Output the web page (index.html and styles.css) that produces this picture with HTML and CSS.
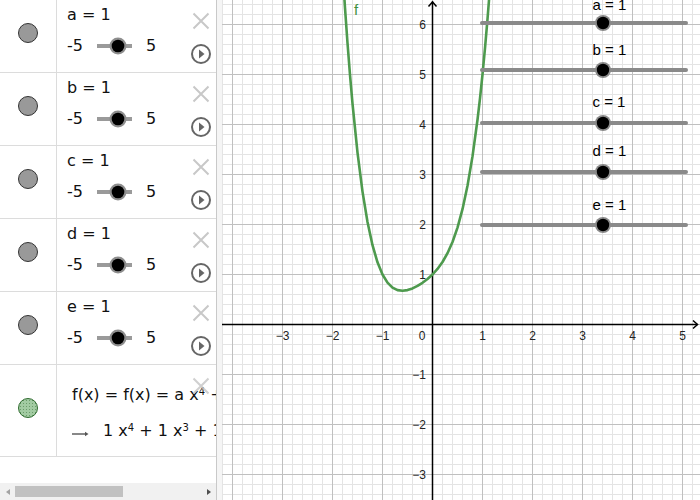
FILE: index.html
```html
<!DOCTYPE html>
<html>
<head>
<meta charset="utf-8">
<link rel="stylesheet" href="styles.css">
</head>
<body>
<div class="app">
  <div class="algebra">
    <div class="rows">
      <div class="row">
        <div class="marble-cell"><span class="marble"></span></div>
        <div class="item">
          <div class="item-main">
            <div class="def">a = 1</div>
            <div class="slider-line"><span>-5</span><svg class="mini" viewBox="0 0 38 20"><line x1="1" y1="10" x2="36" y2="10"/><circle class="halo" cx="22" cy="10" r="8.5"/><circle class="dot" cx="22" cy="10" r="6.3"/></svg><span>5</span></div>
          </div>
          <div class="controls">
            <svg class="del" viewBox="0 0 18 18"><path d="M1.5 1.5L16.5 16.5M16.5 1.5L1.5 16.5"/></svg>
            <svg class="play" viewBox="0 0 20 20"><circle cx="10" cy="10" r="9"/><polygon points="8,5.5 13.5,10 8,14.5"/></svg>
          </div>
        </div>
      </div>
      <div class="row">
        <div class="marble-cell"><span class="marble"></span></div>
        <div class="item">
          <div class="item-main">
            <div class="def">b = 1</div>
            <div class="slider-line"><span>-5</span><svg class="mini" viewBox="0 0 38 20"><line x1="1" y1="10" x2="36" y2="10"/><circle class="halo" cx="22" cy="10" r="8.5"/><circle class="dot" cx="22" cy="10" r="6.3"/></svg><span>5</span></div>
          </div>
          <div class="controls">
            <svg class="del" viewBox="0 0 18 18"><path d="M1.5 1.5L16.5 16.5M16.5 1.5L1.5 16.5"/></svg>
            <svg class="play" viewBox="0 0 20 20"><circle cx="10" cy="10" r="9"/><polygon points="8,5.5 13.5,10 8,14.5"/></svg>
          </div>
        </div>
      </div>
      <div class="row">
        <div class="marble-cell"><span class="marble"></span></div>
        <div class="item">
          <div class="item-main">
            <div class="def">c = 1</div>
            <div class="slider-line"><span>-5</span><svg class="mini" viewBox="0 0 38 20"><line x1="1" y1="10" x2="36" y2="10"/><circle class="halo" cx="22" cy="10" r="8.5"/><circle class="dot" cx="22" cy="10" r="6.3"/></svg><span>5</span></div>
          </div>
          <div class="controls">
            <svg class="del" viewBox="0 0 18 18"><path d="M1.5 1.5L16.5 16.5M16.5 1.5L1.5 16.5"/></svg>
            <svg class="play" viewBox="0 0 20 20"><circle cx="10" cy="10" r="9"/><polygon points="8,5.5 13.5,10 8,14.5"/></svg>
          </div>
        </div>
      </div>
      <div class="row">
        <div class="marble-cell"><span class="marble"></span></div>
        <div class="item">
          <div class="item-main">
            <div class="def">d = 1</div>
            <div class="slider-line"><span>-5</span><svg class="mini" viewBox="0 0 38 20"><line x1="1" y1="10" x2="36" y2="10"/><circle class="halo" cx="22" cy="10" r="8.5"/><circle class="dot" cx="22" cy="10" r="6.3"/></svg><span>5</span></div>
          </div>
          <div class="controls">
            <svg class="del" viewBox="0 0 18 18"><path d="M1.5 1.5L16.5 16.5M16.5 1.5L1.5 16.5"/></svg>
            <svg class="play" viewBox="0 0 20 20"><circle cx="10" cy="10" r="9"/><polygon points="8,5.5 13.5,10 8,14.5"/></svg>
          </div>
        </div>
      </div>
      <div class="row">
        <div class="marble-cell"><span class="marble"></span></div>
        <div class="item">
          <div class="item-main">
            <div class="def">e = 1</div>
            <div class="slider-line"><span>-5</span><svg class="mini" viewBox="0 0 38 20"><line x1="1" y1="10" x2="36" y2="10"/><circle class="halo" cx="22" cy="10" r="8.5"/><circle class="dot" cx="22" cy="10" r="6.3"/></svg><span>5</span></div>
          </div>
          <div class="controls">
            <svg class="del" viewBox="0 0 18 18"><path d="M1.5 1.5L16.5 16.5M16.5 1.5L1.5 16.5"/></svg>
            <svg class="play" viewBox="0 0 20 20"><circle cx="10" cy="10" r="9"/><polygon points="8,5.5 13.5,10 8,14.5"/></svg>
          </div>
        </div>
      </div>
      <div class="row func-row">
        <div class="marble-cell"><span class="marble marble-f"></span></div>
        <div class="func-item">
          <div class="func-def">f(x) = f(x) = a x<sup>4</sup> + b x<sup>3</sup> + c x<sup>2</sup> + d x + e</div>
          <div class="func-val"><svg class="arrow" viewBox="0 0 17 20"><path class="shaft" d="M0 13H15"/><path class="head" d="M13 10.8L16.5 13L13 15.2Z"/></svg>1 x<sup>4</sup> + 1 x<sup>3</sup> + 1 x<sup>2</sup> + 1 x + 1</div>
        </div>
        <svg class="del del-over" viewBox="0 0 18 18"><path d="M1.5 1.5L16.5 16.5M16.5 1.5L1.5 16.5"/></svg>
      </div>
    </div>
    <div class="hscroll">
      <div class="sb-btn"><span class="tri-left"></span></div>
      <div class="sb-track"><div class="sb-thumb"></div></div>
      <div class="sb-btn"><span class="tri-right"></span></div>
    </div>
  </div>
  <div class="splitter"></div>
  <div class="graphics">
    <svg class="plot" width="478" height="500" viewBox="0 0 478 500">
      <defs>
        <pattern id="minor" x="0" y="4" width="10" height="10" patternUnits="userSpaceOnUse">
          <path d="M0.5 0V10M0 0.5H10" stroke="#e4e4e4" stroke-width="1" fill="none"/>
        </pattern>
        <pattern id="major" x="10" y="24" width="50" height="50" patternUnits="userSpaceOnUse">
          <path d="M0.5 0V50M0 0.5H50" stroke="#c0c0c0" stroke-width="1" fill="none"/>
        </pattern>
      </defs>
      <rect width="478" height="500" fill="#fff"/>
      <rect width="478" height="500" fill="url(#minor)"/>
      <rect width="478" height="500" fill="url(#major)"/>

      <g class="axes">
        <path d="M0 324.5H475.5M210.5 1.5V500"/>
        <path d="M206.5 6.5L210.5 2L214.5 6.5"/>
        <path d="M471 320.5L475.5 324.5L471 328.5"/>
      </g>

      <g class="xlabels">
        <text x="60.5" y="340">−3</text>
        <text x="110.5" y="340">−2</text>
        <text x="160.5" y="340">−1</text>
        <text x="200" y="340">0</text>
        <text x="260.5" y="340">1</text>
        <text x="310.5" y="340">2</text>
        <text x="360.5" y="340">3</text>
        <text x="410.5" y="340">4</text>
        <text x="460.5" y="340">5</text>
      </g>
      <g class="ylabels">
        <text x="204" y="28.5">6</text>
        <text x="204" y="78.5">5</text>
        <text x="204" y="128.5">4</text>
        <text x="204" y="178.5">3</text>
        <text x="204" y="228.5">2</text>
        <text x="204" y="278.5">1</text>
        <text x="204" y="378.5">−1</text>
        <text x="204" y="428.5">−2</text>
        <text x="204" y="478.5">−3</text>
      </g>

      <path class="curve" d="M120.5 -30.8 L123 7.9 L125.5 43 L128 74.9 L130.5 103.6 L135.5 152.6 L140.5 191.6 L145.5 222 L150.5 245.2 L155.5 262.3 L160.5 274.5 L165.5 282.6 L170.5 287.6 L175.5 290.1 L180.5 290.8 L185.5 290.1 L190.5 288.4 L195.5 285.9 L200.5 282.8 L205.5 279 L210.5 274.5 L215.5 268.9 L220.5 262 L225.5 253.2 L230.5 242 L235.5 227.6 L240.5 209.2 L245.5 185.8 L250.5 156.4 L255.5 119.7 L258 98.3 L260.5 74.5 L263 48.2 L265.5 19.2 L268 -12.6 L270.5 -47.6"/>
      <text class="flabel" x="132" y="15">f</text>

      <g class="sliders">
        <line x1="260" y1="23" x2="464" y2="23"/>
        <circle class="halo" cx="381" cy="23" r="8"/><circle class="dot" cx="381" cy="23" r="6.2"/>
        <text x="370.5" y="10">a = 1</text>

        <line x1="260" y1="70" x2="464" y2="70"/>
        <circle class="halo" cx="381" cy="70" r="8"/><circle class="dot" cx="381" cy="70" r="6.2"/>
        <text x="370.5" y="54.5">b = 1</text>

        <line x1="260" y1="123" x2="464" y2="123"/>
        <circle class="halo" cx="381" cy="123" r="8"/><circle class="dot" cx="381" cy="123" r="6.2"/>
        <text x="370.5" y="107">c = 1</text>

        <line x1="260" y1="172" x2="464" y2="172"/>
        <circle class="halo" cx="381" cy="172" r="8"/><circle class="dot" cx="381" cy="172" r="6.2"/>
        <text x="370.5" y="156">d = 1</text>

        <line x1="260" y1="225" x2="464" y2="225"/>
        <circle class="halo" cx="381" cy="225" r="8"/><circle class="dot" cx="381" cy="225" r="6.2"/>
        <text x="370.5" y="209.5">e = 1</text>
      </g>
    </svg>
  </div>
</div>
</body>
</html>
```

FILE: styles.css
```css
* { box-sizing: border-box; }

html, body {
  margin: 0;
  padding: 0;
  background: #fff;
}

body {
  width: 700px;
  height: 500px;
  overflow: hidden;
  font-family: "DejaVu Sans", "Liberation Sans", sans-serif;
  color: #111;
}

.app {
  display: flex;
  height: 500px;
}

/* ---------- algebra view ---------- */
.algebra {
  width: 216px;
  flex: none;
  display: flex;
  flex-direction: column;
  background: #fff;
}

.rows {
  flex: 1;
  overflow: hidden;
}

.row {
  display: flex;
  height: 73px;
  border-bottom: 1px solid #dcdcdc;
  overflow: hidden;
}

.func-row {
  height: 92px;
  position: relative;
}

.marble-cell {
  width: 57px;
  flex: none;
  border-right: 1px solid #dcdcdc;
  display: flex;
  justify-content: center;
  align-items: flex-start;
}

.marble {
  width: 20px;
  height: 20px;
  border-radius: 50%;
  background: #999;
  border: 1px solid #333;
  margin-top: 23px;
}

.marble-f {
  margin-top: 33px;
  border-color: #2f6b2f;
  background:
    radial-gradient(circle, rgba(40, 100, 40, 0.45) 0.6px, transparent 0.9px) 0 0 / 3px 3px,
    #a2cba2;
}

.item {
  flex: 1;
  min-width: 0;
  display: flex;
  padding-left: 10px;
}

.item-main {
  flex: 1;
  padding-top: 5px;
  font-size: 16px;
}

.def {
  line-height: 20px;
  height: 20px;
  white-space: nowrap;
}

.slider-line {
  display: flex;
  align-items: center;
  height: 20px;
  line-height: 20px;
  margin-top: 11px;
  white-space: nowrap;
}

.mini {
  width: 38px;
  height: 20px;
  margin: 0 12px 0 13px;
  flex: none;
}

.mini line {
  stroke: #9a9a9a;
  stroke-width: 4;
}

.mini .halo { fill: #8e8e8e; }
.mini .dot { fill: #000; }

.controls {
  width: 20px;
  flex: none;
  margin-right: 5px;
  padding-top: 12px;
  display: flex;
  flex-direction: column;
  align-items: center;
}

.del {
  width: 18px;
  height: 18px;
  flex: none;
}

.del path {
  stroke: #c8c8c8;
  stroke-width: 2;
  fill: none;
}

.play {
  width: 20px;
  height: 20px;
  margin-top: 14px;
  flex: none;
}

.play circle {
  fill: #fff;
  stroke: #666;
  stroke-width: 2;
}

.play polygon { fill: #666; }

.func-item {
  flex: 1;
  min-width: 0;
  padding: 20px 0 0 15px;
  white-space: nowrap;
  font-size: 16px;
  line-height: 20px;
}

.func-def,
.func-val {
  height: 20px;
}

.func-val {
  margin-top: 16px;
}

sup {
  font-size: 10px;
  line-height: 0;
  vertical-align: 5px;
}

.arrow {
  display: inline-block;
  width: 17px;
  height: 20px;
  vertical-align: top;
  margin-right: 14px;
}

.arrow .shaft {
  stroke: #555;
  stroke-width: 1.4;
  fill: none;
}

.arrow .head { fill: #555; }

.del-over {
  position: absolute;
  top: 12px;
  right: 6px;
  opacity: 0.85;
}

/* scrollbar */
.hscroll {
  height: 17px;
  flex: none;
  display: flex;
  background: #f1f1f1;
}

.sb-btn {
  width: 15px;
  flex: none;
  display: flex;
  align-items: center;
  justify-content: center;
}

.tri-left {
  width: 0;
  height: 0;
  border-top: 3.5px solid transparent;
  border-bottom: 3.5px solid transparent;
  border-right: 4px solid #a3a3a3;
}

.tri-right {
  width: 0;
  height: 0;
  border-top: 3.5px solid transparent;
  border-bottom: 3.5px solid transparent;
  border-left: 4px solid #505050;
}

.sb-track {
  flex: 1;
  display: flex;
  align-items: center;
}

.sb-thumb {
  width: 108px;
  height: 11px;
  background: #c1c1c1;
}

/* splitter */
.splitter {
  width: 6px;
  flex: none;
  background: #f5f5f5;
  border-left: 1px solid #c9c9c9;
}

/* ---------- graphics view ---------- */
.graphics {
  flex: 1;
  overflow: hidden;
}

.plot {
  display: block;
}

.axes path {
  stroke: #000;
  stroke-width: 1.5;
  fill: none;
}

.xlabels text,
.ylabels text {
  font-family: "Liberation Sans", Arial, sans-serif;
  font-size: 12px;
  fill: #222;
}

.xlabels text { text-anchor: middle; }
.ylabels text { text-anchor: end; }

.curve {
  fill: none;
  stroke: #4e9a4e;
  stroke-width: 2.6;
  stroke-linejoin: round;
  stroke-linecap: round;
}

.flabel {
  font-family: "Liberation Sans", Arial, sans-serif;
  font-size: 15px;
  fill: #3f8f3f;
}

.sliders line {
  stroke: #8a8a8a;
  stroke-width: 4;
  stroke-linecap: round;
}

.sliders .halo { fill: #8a8a8a; }
.sliders .dot { fill: #000; }

.sliders text {
  font-family: "Liberation Sans", Arial, sans-serif;
  font-size: 15px;
  fill: #000;
}
```
